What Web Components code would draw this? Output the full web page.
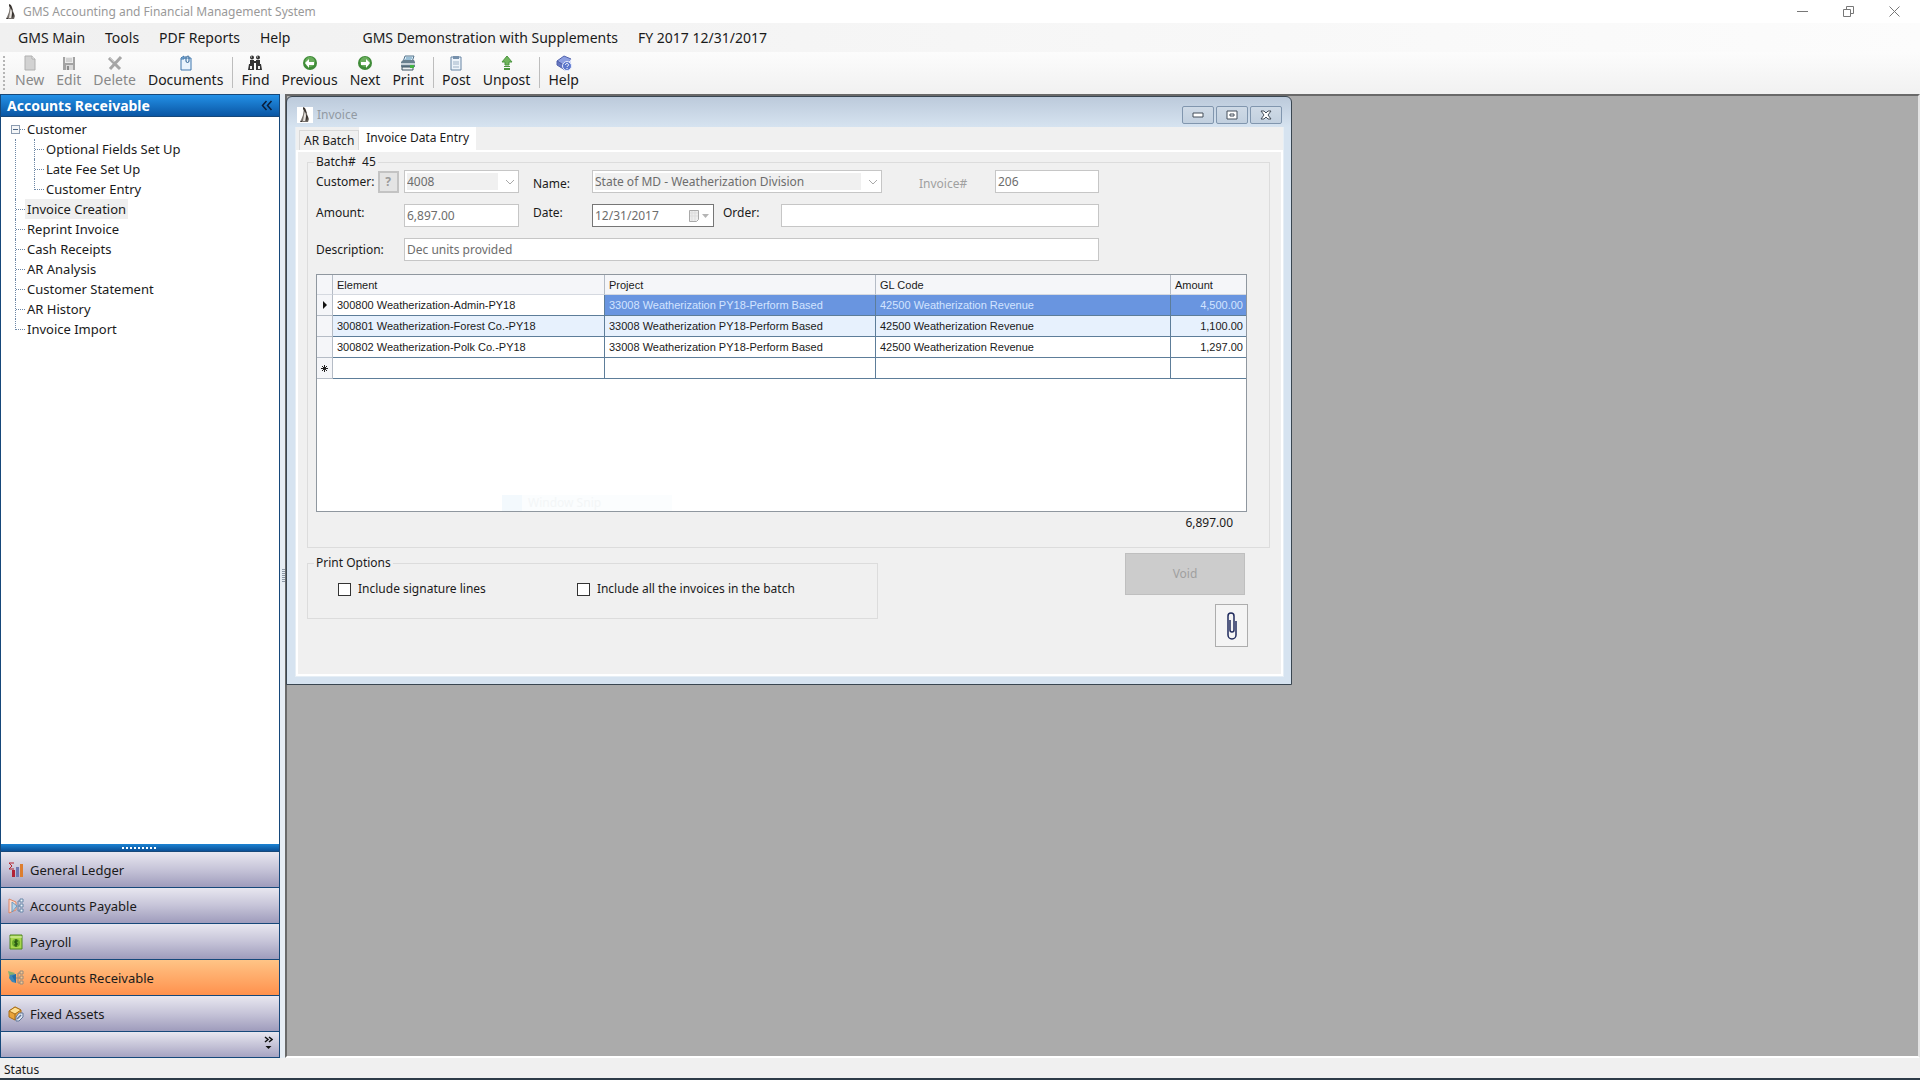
<!DOCTYPE html>
<html lang="en">
<head>
<meta charset="utf-8">
<title>GMS Accounting and Financial Management System</title>
<style>
  html, body {
    height: 100%;
    margin: 0;
  }

  body {
    font-family: "Noto Sans", "Open Sans", sans-serif;
    font-size: 13px;
    line-height: 16px;
    color: #1a1a1a;
    overflow: hidden;
  }
</style>
</head>
<body>
<gms-app></gms-app>

<script>
const icons = {
  penguin: `<path d="M7 1l2 2 1 4 2 5-1 3H6l-2-2 2-5z" fill="#77716c"/><path d="M8 4l1 5-1 5H6l1-6z" fill="#e8e4df"/><path d="M6 0l2 1 2 6-2-2-2-3zM9 7l2 3-1 5-1-3zM4 13l2 2H3z" fill="#38332f"/>`,
  page: `<path d="M3 1h7l3 3v11H3z" fill="#d2d2d2" stroke="#b0b0b0"/><path d="M10 1v3h3" fill="#f4f4f4" stroke="#b0b0b0"/>`,
  disk: `<path d="M2 2h12v13H2z" fill="#a3a3a3"/><path d="M4 2h8v6H4z" fill="#ececec"/><path d="M5 4h6M5 6h6" stroke="#b8b8b8"/><path d="M5 10h7v5H5z" fill="#d9d9d9"/><path d="M6 11h2v4H6z" fill="#8b8b8b"/>`,
  cross: `<path d="M2 3l11 11M14 2L3 14" stroke="#a6a6a6" stroke-width="3"/><path d="M2 2l5 5" stroke="#c9c9c9"/>`,
  docs: `<path d="M3 3h10v12H3z" fill="#e9f4fd" stroke="#3f77ad"/><path d="M3 3l3-2v3H3" fill="#8fbbe0" stroke="#3f77ad"/><path d="M8 1v5a1 1 0 0 0 3 0V2a1 1 0 0 0-2 0" fill="none" stroke="#2c6396"/>`,
  binoculars: `<g fill="#333"><circle cx="5" cy="2.500" r="2"/><circle cx="11" cy="2.500" r="2"/><path d="M3 5h4v4H3zM9 5h4v4H9zM6 6h4v2H6z"/><path d="M2 9h5v6H1zM9 9h5l1 6H9z"/></g><path d="M3 11h2v3H3zM11 11h2v3h-2z" fill="#eee"/><path d="M4 2h1M10 2h1" stroke="#ddd"/>`,
  prev: `<circle cx="8" cy="8" r="7" fill="#3f8b38"/><circle cx="8" cy="7" r="5" fill="#69ad5c"/><path d="M3 8l4-4v3h5v3H7v3z" fill="#fff"/>`,
  next: `<circle cx="8" cy="8" r="7" fill="#3f8b38"/><circle cx="8" cy="7" r="5" fill="#69ad5c"/><path d="M13 8L9 4v3H4v3h5v3z" fill="#fff"/>`,
  printer: `<path d="M5 1h9l-2 6H3z" fill="#dcecf7" stroke="#55748c"/><path d="M6 3h6M5 5h6" stroke="#5b93b5"/><path d="M1 7l2-2h11l1 2v5H1z" fill="#69808f"/><path d="M1 8h14v2H1z" fill="#c7d2d9"/><path d="M2 12h11v3H2z" fill="#eef2f4" stroke="#3f5462"/><path d="M10 10h4v3h-4z" fill="#42b342"/>`,
  clipboard: `<path d="M3 2h10v13H3z" fill="#edf3fa" stroke="#6784a3"/><path d="M5 1h6v3H5z" fill="#7690ab"/><path d="M5 7h6M5 9h6M5 12h6" stroke="#9fb2c6"/>`,
  up: `<path d="M8 1l5 6h-3v3H6V7H3z" fill="#6fb55c" stroke="#4c9440"/><path d="M5 11h6v1H5zM5 13h6v2H5z" fill="#4c9440"/>`,
  book: `<path d="M1 6l7-5 7 3-6 7z" fill="#8d9fe0" stroke="#5061ac"/><path d="M1 6v4l8 5v-4z" fill="#6677c0" stroke="#5061ac"/><path d="M9 11l6-7v4l-6 7z" fill="#dbe1fa"/><circle cx="11" cy="11" r="4.500" fill="#5b76cb" stroke="#e8edff"/><path d="M9.500 10c0-2 3-2 3 0 0 1-1.500 1-1.500 2M11 13v1" fill="none" stroke="#fff"/>`,
  ledger: `<path d="M6 1H1l3 3-3 3h5" fill="none" stroke="#b3232c"/><path d="M4 8h3v7H4z" fill="#b22335"/><path d="M8 5h3v10H8z" fill="#7079b2"/><path d="M12 2h3v13h-3z" fill="#dd7e2f"/>`,
  payable: `<path d="M1 1l7 3v8l-7 3z" fill="#f8ddd2" stroke="#df8664"/><path d="M4 4l5 4-5 6z" fill="#b9d4ea" stroke="#6a98bd"/><path d="M12 3h-2v10h2M10 8h2" fill="none" stroke="#6686a7"/><path d="M12 1h3v3h-3zM12 6h3v3h-3zM12 11h3v3h-3z" fill="#eef5fb" stroke="#6686a7"/>`,
  payroll: `<path d="M2 1h12v14H2z" fill="#a8d64e" stroke="#4f8623"/><path d="M2 3h12" stroke="#e1f4b4"/><circle cx="8" cy="9" r="4" fill="#6aaa2d"/><path d="M10 7H7v2h2v2H6M8 5v8" fill="none" stroke="#1f4b11"/>`,
  receivable: `<path d="M0 1l7 2-5 6z" fill="#87b06e"/><path d="M2 5l6-1v9l-4-1-3-4z" fill="#3f86b8"/><path d="M4 6l4-2v9z" fill="#256ca4"/><path d="M12 3h-2v10h2M8 8h4" fill="none" stroke="#988a7c"/><path d="M12 1h3v3h-3zM12 6h3v3h-3zM12 11h3v3h-3z" fill="#f8c992" stroke="#988a7c"/>`,
  assets: `<path d="M1 5l6-4 6 3v6l-6 4-6-3z" fill="#e9a43a" stroke="#a96d17"/><path d="M1 5l6 3 6-4-6-3z" fill="#ffdf90" stroke="#a96d17"/><path d="M7 8v6" stroke="#a96d17"/><path d="M8 11l3-4h4v4l-4 4H8z" fill="#dfe7f2" stroke="#61779a"/><path d="M9 13l4-4" stroke="#61779a" stroke-width="1.500"/>`
};

function icon(name) {
  return `<svg width="16" height="16" viewBox="0 0 16 16" aria-hidden="true">${icons[name]}</svg>`;
}

class Base extends HTMLElement {
  constructor() {
    super();
    this.root = this.attachShadow({ mode: 'open' });
  }

  connectedCallback() {
    this.root.innerHTML = this.render();
  }

  attr(name) {
    return this.getAttribute(name) || '';
  }
}

class GmsApp extends Base {
  render() {
    return `
    <style>
      :host { display: flex; flex-direction: column; height: 100vh; background: #f0f0f0; }
      .work { flex: 1; display: flex; min-height: 0; }
      .splitter { width: 5px; background: #e6edf4; display: flex; align-items: center; justify-content: flex-end; }
      .splitter i { width: 3px; height: 14px; background: repeating-linear-gradient(#8c98a5 0 1px, transparent 1px 2px); }
      main {
        flex: 1; position: relative; background: #ababab;
        border-top: 2px solid #696969; border-left: 2px solid #696969;
        border-right: 2px solid #e3e3e3; border-bottom: 2px solid #fff;
      }
      invoice-window { position: absolute; left: -1px; top: 0; }
      footer { height: 17px; padding: 3px 4px 0; display: flex; align-items: center; font-size: 12px; border-bottom: 2px solid #2d3b48; }
    </style>
    <title-bar></title-bar>
    <menu-bar></menu-bar>
    <tool-bar></tool-bar>
    <div class="work">
      <nav-pane></nav-pane>
      <div class="splitter"><i></i></div>
      <main><invoice-window></invoice-window></main>
    </div>
    <footer>Status</footer>
    `;
  }
}

class TitleBar extends Base {
  render() {
    return `
    <style>
      :host { display: flex; align-items: center; height: 23px; background: #fff; color: #999; font-size: 12px; padding: 0 3px; }
      svg { display: block; }
      .name { flex: 1; margin-left: 4px; }
      button { border: 0; background: none; padding: 0; width: 46px; height: 20px; display: grid; place-items: center; }
      button svg { fill: none; stroke: #777; }
      .buttons { display: flex; }
    </style>
    ${icon('penguin')}
    <span class="name">GMS Accounting and Financial Management System</span>
    <div class="buttons">
      <button aria-label="Minimize"><svg width="11" height="11"><path d="M0 5.500h11"/></svg></button>
      <button aria-label="Restore"><svg width="11" height="11"><path d="M.5 3.500h7v7h-7zM3.500 3V.5h7v7H8"/></svg></button>
      <button aria-label="Close"><svg width="11" height="11"><path d="M.5.5l10 10M10.500.5l-10 10"/></svg></button>
    </div>
    `;
  }
}

class MenuBar extends Base {
  render() {
    return `
    <style>
      :host { display: flex; align-items: center; height: 29px; padding-left: 18px; gap: 20px; background: linear-gradient(90deg, #f0f0f0, #fcfcfc); }
      button { border: 0; background: none; padding: 0; font: inherit; color: inherit; }
      :host, button { font-size: 14px; }
      .org { margin-left: 52px; }
    </style>
    <button>GMS Main</button>
    <button>Tools</button>
    <button>PDF Reports</button>
    <button>Help</button>
    <span class="org">GMS Demonstration with Supplements</span>
    <span>FY 2017 12/31/2017</span>
    `;
  }
}

class ToolBar extends Base {
  render() {
    return `
    <style>
      :host { display: flex; height: 42px; padding-left: 3px; background: linear-gradient(#fcfcfc, #f1f1f1); border-radius: 0 0 4px 0; font-size: 14px; }
      .grip { width: 2px; margin: 4px 4px 4px 0; background: repeating-linear-gradient(#b5b5b5 0 2px, transparent 2px 4px); }
      .sep { width: 1px; margin: 5px 2px 6px 3px; background: #bdbdbd; }
    </style>
    <span class="grip"></span>
    <tool-button icon="page" disabled>New</tool-button>
    <tool-button icon="disk" disabled>Edit</tool-button>
    <tool-button icon="cross" disabled>Delete</tool-button>
    <tool-button icon="docs">Documents</tool-button>
    <span class="sep"></span>
    <tool-button icon="binoculars">Find</tool-button>
    <tool-button icon="prev">Previous</tool-button>
    <tool-button icon="next">Next</tool-button>
    <tool-button icon="printer">Print</tool-button>
    <span class="sep"></span>
    <tool-button icon="clipboard">Post</tool-button>
    <tool-button icon="up">Unpost</tool-button>
    <span class="sep"></span>
    <tool-button icon="book">Help</tool-button>
    `;
  }
}

class ToolButton extends Base {
  render() {
    return `
    <style>
      :host { display: block; }
      button {
        display: flex; flex-direction: column; align-items: center; gap: 1px;
        border: 0; background: none; padding: 3px 6px 0; font: inherit; color: inherit;
      }
      button:disabled { color: #888; }
      svg { display: block; }
    </style>
    <button ${this.hasAttribute('disabled') ? 'disabled' : ''}>${icon(this.attr('icon'))}<slot></slot></button>
    `;
  }
}

class NavPane extends Base {
  render() {
    return `
    <style>
      :host { display: flex; flex-direction: column; width: 278px; border: 1px solid #16487a; background: #fff; }
      header {
        display: flex; justify-content: space-between; align-items: center; height: 21px; padding: 0 6px 0 6px;
        background: linear-gradient(#2390e6, #0a56a4); border-bottom: 1px solid #16487a; color: #fff; font-size: 14px; font-weight: bold;
      }
      header svg { fill: none; stroke: #0a1c38; stroke-width: 1.500; }
      nav-tree { flex: 1; }
      .bar { height: 7px; background: linear-gradient(#1c83d4, #0a4f95); display: flex; justify-content: center; align-items: center; }
      .bar i { width: 36px; height: 2px; background: repeating-linear-gradient(90deg, #fff 0 2px, transparent 2px 4px); }
      .more { height: 25px; border-top: 1px solid #16487a; background: linear-gradient(#e8e7f0, #a7a4c2); text-align: right; padding-right: 6px; }
      .more svg { margin-top: 4px; fill: none; stroke: #111; }
    </style>
    <header>Accounts Receivable
      <svg width="12" height="11"><path d="M5.500 1L1.500 5.500l4 4.500M10.500 1l-4 4.500 4 4.500"/></svg>
    </header>
    <nav-tree></nav-tree>
    <div class="bar"><i></i></div>
    <nav-button icon="ledger">General Ledger</nav-button>
    <nav-button icon="payable">Accounts Payable</nav-button>
    <nav-button icon="payroll">Payroll</nav-button>
    <nav-button icon="receivable" active>Accounts Receivable</nav-button>
    <nav-button icon="assets">Fixed Assets</nav-button>
    <div class="more"><svg width="9" height="14"><path d="M1 1l3 2.500L1 6M5 1l3 2.500L5 6" stroke-width="1.500"/><path d="M1.500 10h6L4.500 13z" fill="#111" stroke="none"/></svg></div>
    `;
  }
}

class NavTree extends Base {
  render() {
    const children = ['Optional Fields Set Up', 'Late Fee Set Up', 'Customer Entry'];
    const items = ['Invoice Creation', 'Reprint Invoice', 'Cash Receipts', 'AR Analysis', 'Customer Statement', 'AR History', 'Invoice Import'];
    return `
    <style>
      :host { display: block; padding: 2px 0 0 14px; }
      ul { list-style: none; margin: 0; padding: 0; }
      ul ul { border-left: 1px dotted #6d87a5; padding-left: 18px; }
      .row { display: flex; align-items: center; height: 20px; }
      .twig { width: 10px; height: 20px; box-sizing: border-box; border-left: 1px dotted #6d87a5; display: flex; align-items: center; }
      .twig::after { content: ""; flex: 1; border-top: 1px dotted #6d87a5; }
      .last .twig { height: 11px; align-self: flex-start; align-items: flex-end; }
      .root .twig { border: 0; }
      .root .box { flex: none; width: 9px; height: 9px; box-sizing: border-box; border: 1px solid #8b9bb0; margin-left: -4px; background: linear-gradient(#4b6584, #4b6584) center / 5px 1px no-repeat #f4f6f8; }
      a { color: inherit; text-decoration: none; line-height: 20px; padding: 0 2px; }
      .current { background: #efefef; }
    </style>
    <ul>
      <li>
        <div class="row root"><span class="twig"><i class="box"></i></span><a href="#">Customer</a></div>
        <ul>${children.map((text, i) => this.row(text, i === children.length - 1)).join('')}</ul>
      </li>
      ${items.map((text, i) => this.row(text, i === items.length - 1, i === 0)).join('')}
    </ul>
    `;
  }

  row(text, last, current) {
    return `<li class="row ${last ? 'last' : ''}"><span class="twig"></span><a href="#" class="${current ? 'current' : ''}">${text}</a></li>`;
  }
}

class NavButton extends Base {
  render() {
    return `
    <style>
      :host { display: block; }
      button {
        display: flex; align-items: center; gap: 6px; width: 100%; height: 36px; padding: 0 7px;
        border: 0; border-top: 1px solid #16487a; background: linear-gradient(#e8e7f0, #c6c4d8 50%, #9f9cbc);
        font: inherit; color: inherit;
      }
      :host([active]) button { background: linear-gradient(#ffc486, #ff914d); }
    </style>
    <button>${icon(this.attr('icon'))}<slot></slot></button>
    `;
  }
}

class InvoiceWindow extends Base {
  render() {
    return `
    <style>
      :host {
        display: block; box-sizing: border-box; width: 1006px; padding: 0 7px 7px 8px;
        border: 1px solid #3a4651; border-radius: 6px 6px 0 0;
        background: linear-gradient(#bccadb, #d6e3f0 30px);
        font-size: 12px;
      }
      header { display: flex; align-items: center; height: 24px; padding: 6px 2px 0; color: #929aa3; gap: 2px; }
      header > svg { background: #fff; }
      header span { flex: 1; padding-left: 2px; }
      header button { width: 32px; height: 18px; padding: 0; display: grid; place-items: center; border: 1px solid #8196ae; border-radius: 2px; background: linear-gradient(#cfdae6, #c2d0df); }
      header button svg { fill: #fff; stroke: #454f5b; }
      .client { background: #f0f0f0; border: 1px solid #e6eef5; border-top: 0; }
      .tabs { display: flex; align-items: flex-end; height: 23px; padding-left: 3px; }
      .tabs button { font: inherit; color: inherit; border: 1px solid #d9d9d9; border-bottom: 0; background: #f0f0f0; padding: 0 4px; height: 20px; }
      .tabs .active { background: #fff; height: 23px; border-color: #fff; padding: 0 6px 2px; }
      .page { border: 2px solid #fff; padding: 2px 11px 27px 9px; }
      .form { display: flex; flex-direction: column; gap: 11px; padding: 0 148px 13px 0; }
      .line { display: flex; align-items: center; }
      .line form-field { flex: none; }
      .line .grow { flex: 1; }
      .total { margin: 0; padding: 3px 14px 16px; text-align: right; }
      .bottom { display: flex; justify-content: space-between; align-items: flex-start; padding-right: 12px; }
      .options { width: 571px; margin-top: 7px; }
      .checks { display: flex; padding: 10px 22px 21px; gap: 91px; }
      .actions { display: flex; flex-direction: column; align-items: flex-end; gap: 9px; padding: 5px 10px 0 0; }
      .void { width: 120px; height: 42px; margin-right: 3px; border: 1px solid #bfbfbf; background: #ccc; color: #a0a0a0; font: inherit; }
      .clip { width: 33px; height: 43px; padding: 0; border: 1px solid #adadad; background: #f4f4f4; display: grid; place-items: center; }
      .grid { position: relative; }
      .ghost { position: absolute; left: 186px; bottom: 1px; width: 170px; padding-left: 26px; box-sizing: border-box; color: #f3f6f7; background: linear-gradient(90deg, #f3f9fd 20px, #fbfdfe 20px); }
    </style>
    <header>
      ${icon('penguin')}<span>Invoice</span>
      <button aria-label="Minimize"><svg width="12" height="6"><path d="M1 1h10v4H1z"/></svg></button>
      <button aria-label="Maximize"><svg width="12" height="10"><path d="M1 1h10v8H1zM4 4h4v2H4z"/></svg></button>
      <button aria-label="Close"><svg width="12" height="10"><path d="M1 1h3l2 2 2-2h3L8 5l3 4H8L6 7 4 9H1l3-4z"/></svg></button>
    </header>
    <div class="client">
      <div class="tabs" role="tablist">
        <button role="tab">AR Batch</button>
        <button role="tab" class="active" aria-selected="true">Invoice Data Entry</button>
      </div>
      <div class="page">
        <group-box legend="Batch#&nbsp; 45">
          <div class="form">
            <div class="line">
              <form-field kind="combo" label="Customer:" value="4008" label-width="88" width="115" lookup></form-field>
              <form-field kind="combo" label="Name:" value="State of MD - Weatherization Division" gap="14" label-width="59" width="290" low></form-field>
              <form-field class="grow" label="Invoice#" value="206" gap="37" label-width="76" low dim></form-field>
            </div>
            <div class="line">
              <form-field label="Amount:" value="6,897.00" label-width="88" width="115" high></form-field>
              <form-field kind="date" label="Date:" value="12/31/2017" gap="14" label-width="59" width="122" high></form-field>
              <form-field class="grow" label="Order:" value="" gap="9" label-width="58" high></form-field>
            </div>
            <div class="line">
              <form-field class="grow" label="Description:" value="Dec units provided" label-width="88"></form-field>
            </div>
          </div>
          <div class="grid">
            <data-grid></data-grid>
            <span class="ghost">Window Snip</span>
          </div>
          <p class="total">6,897.00</p>
        </group-box>
        <div class="bottom">
          <group-box class="options" legend="Print Options">
            <div class="checks">
              <check-box>Include signature lines</check-box>
              <check-box>Include all the invoices in the batch</check-box>
            </div>
          </group-box>
          <div class="actions">
            <button class="void" disabled>Void</button>
            <button class="clip" aria-label="Attachments">
              <svg width="12" height="28" fill="none" stroke="#1f2a5c" stroke-width="1.500"><path d="M8 8v10a1.500 1.500 0 0 1-4 0V8M2 8v15a3.500 3.500 0 0 0 8 0V9M2 8V4a3 3 0 0 1 6 0v5"/></svg>
            </button>
          </div>
        </div>
      </div>
    </div>
    `;
  }
}

class GroupBox extends Base {
  render() {
    return `
    <style>
      :host { display: block; }
      fieldset { margin: 0; padding: 0 22px 0 8px; border: 1px solid #dcdcdc; min-width: 0; }
      :host(.options) fieldset { padding: 0 8px; }
      legend { padding: 0 2px; margin-left: -2px; }
    </style>
    <fieldset><legend>${this.attr('legend')}</legend><slot></slot></fieldset>
    `;
  }
}

class FormField extends Base {
  render() {
    const width = this.attr('width');
    return `
    <style>
      :host { display: flex; align-items: center; padding-left: ${this.attr('gap') || 0}px; }
      .label { width: ${this.attr('label-width')}px; flex: none; display: flex; align-items: center; gap: 3px; }
      :host([low]) .label { padding-top: 5px; }
      :host([high]) .label { padding-bottom: 5px; }
      :host([dim]) .label { color: #a0a0a0; }
      .box { ${width ? `width: ${width}px` : 'flex: 1'}; display: grid; align-items: center; }
      .box > * { grid-area: 1 / 1; }
      input, select {
        width: 100%; height: 23px; box-sizing: border-box; border: 1px solid #c6c6c6; border-radius: 0; padding: 0 2px;
        background: #fff; color: #6d6d6d; font: inherit; opacity: 1; appearance: none;
      }
      select { background: linear-gradient(#f0f0f0, #f0f0f0) 2px 2px / calc(100% - 22px) calc(100% - 4px) no-repeat #fff; }
      :host([kind="date"]) input { border-color: #767676; }
      svg { justify-self: end; margin-right: 4px; fill: none; stroke: #a9a9a9; }
      .lookup { width: 21px; height: 22px; padding: 0; border: 2px solid #c3c3c3; background: #e4e4e4; color: #9a9a9a; font: inherit; font-weight: bold; }
    </style>
    <div class="label"><label for="field">${this.attr('label')}</label>${this.hasAttribute('lookup') ? '<button class="lookup" disabled>?</button>' : ''}</div>
    <div class="box">${this.control()}</div>
    `;
  }

  control() {
    const value = this.attr('value');
    switch (this.attr('kind')) {
      case 'combo':
        return `<select id="field" disabled><option>${value}</option></select>
          <svg width="10" height="6"><path d="M1 1l4 4 4-4"/></svg>`;
      case 'date':
        return `<input id="field" value="${value}" disabled>
          <svg width="22" height="14"><path d="M1.500 1.500h9v9l-2 2h-7z" fill="#eee"/><path d="M2 4h8M2 7h8M4 2v10M7 2v10" stroke="#ddd"/><path d="M14 5h7l-3.500 4z" fill="#b5b5b5" stroke="none"/></svg>`;
      default:
        return `<input id="field" value="${value}" disabled>`;
    }
  }
}

class CheckBox extends Base {
  render() {
    return `
    <style>
      :host { display: block; }
      label { display: flex; align-items: center; gap: 7px; }
      input { appearance: none; box-sizing: border-box; width: 13px; height: 13px; margin: 0; border: 1px solid #333; background: #fff; }
    </style>
    <label><input type="checkbox"><slot></slot></label>
    `;
  }
}

class DataGrid extends Base {
  render() {
    const rows = [
      ['300800 Weatherization-Admin-PY18', '33008 Weatherization PY18-Perform Based', '42500 Weatherization Revenue', '4,500.00'],
      ['300801 Weatherization-Forest Co.-PY18', '33008 Weatherization PY18-Perform Based', '42500 Weatherization Revenue', '1,100.00'],
      ['300802 Weatherization-Polk Co.-PY18', '33008 Weatherization PY18-Perform Based', '42500 Weatherization Revenue', '1,297.00'],
      ['', '', '', '']
    ];
    return `
    <style>
      :host { display: block; box-sizing: border-box; min-height: 238px; border: 1px solid #8f979f; background: #fff; font: 11px/14px "Liberation Sans", Arial, sans-serif; }
      table { width: 100%; table-layout: fixed; border-collapse: separate; border-spacing: 0; }
      th, td { box-sizing: border-box; height: 21px; padding: 0 3px 0 4px; text-align: left; font-weight: normal; border-right: 1px solid #5d7d99; border-bottom: 1px solid #5d7d99; white-space: nowrap; }
      thead th { height: 20px; background: #f5f6f9; border-color: #b5bcc6; border-bottom-color: #d5d9e0; }
      tbody th { background: #f5f6f9; border-color: #b5bcc6; padding: 0; text-align: center; }
      tbody th svg { display: block; margin: auto; }
      tr > :last-child { border-right: 0; }
      td:last-child { text-align: right; }
      .selected td:nth-child(n+3) { background: #6995e0; color: #d3e4ff; }
      .alt td { background: #e7f1fd; }
    </style>
    <table>
      <colgroup><col style="width: 16px"><col style="width: 272px"><col style="width: 271px"><col style="width: 295px"><col></colgroup>
      <thead><tr><th></th><th>Element</th><th>Project</th><th>GL Code</th><th>Amount</th></tr></thead>
      <tbody>
        ${rows.map((row, i) => `
        <tr class="${['selected', 'alt'][i] || ''}"><th>${this.marker(i)}</th>${row.map(cell => `<td>${cell}</td>`).join('')}</tr>`).join('')}
      </tbody>
    </table>
    `;
  }

  marker(i) {
    if (i === 0) {
      return '<svg width="4" height="8"><path d="M0 0l4 4-4 4z" fill="#111"/></svg>';
    } else if (i === 3) {
      return '<svg width="7" height="7"><path d="M3.500 0v7M0 3.500h7M1 1l5 5M6 1L1 6" stroke="#222"/></svg>';
    }

    return '';
  }
}

customElements.define('title-bar', TitleBar);
customElements.define('menu-bar', MenuBar);
customElements.define('tool-button', ToolButton);
customElements.define('tool-bar', ToolBar);
customElements.define('nav-tree', NavTree);
customElements.define('nav-button', NavButton);
customElements.define('nav-pane', NavPane);
customElements.define('group-box', GroupBox);
customElements.define('form-field', FormField);
customElements.define('check-box', CheckBox);
customElements.define('data-grid', DataGrid);
customElements.define('invoice-window', InvoiceWindow);
customElements.define('gms-app', GmsApp);
</script>
</body>
</html>
